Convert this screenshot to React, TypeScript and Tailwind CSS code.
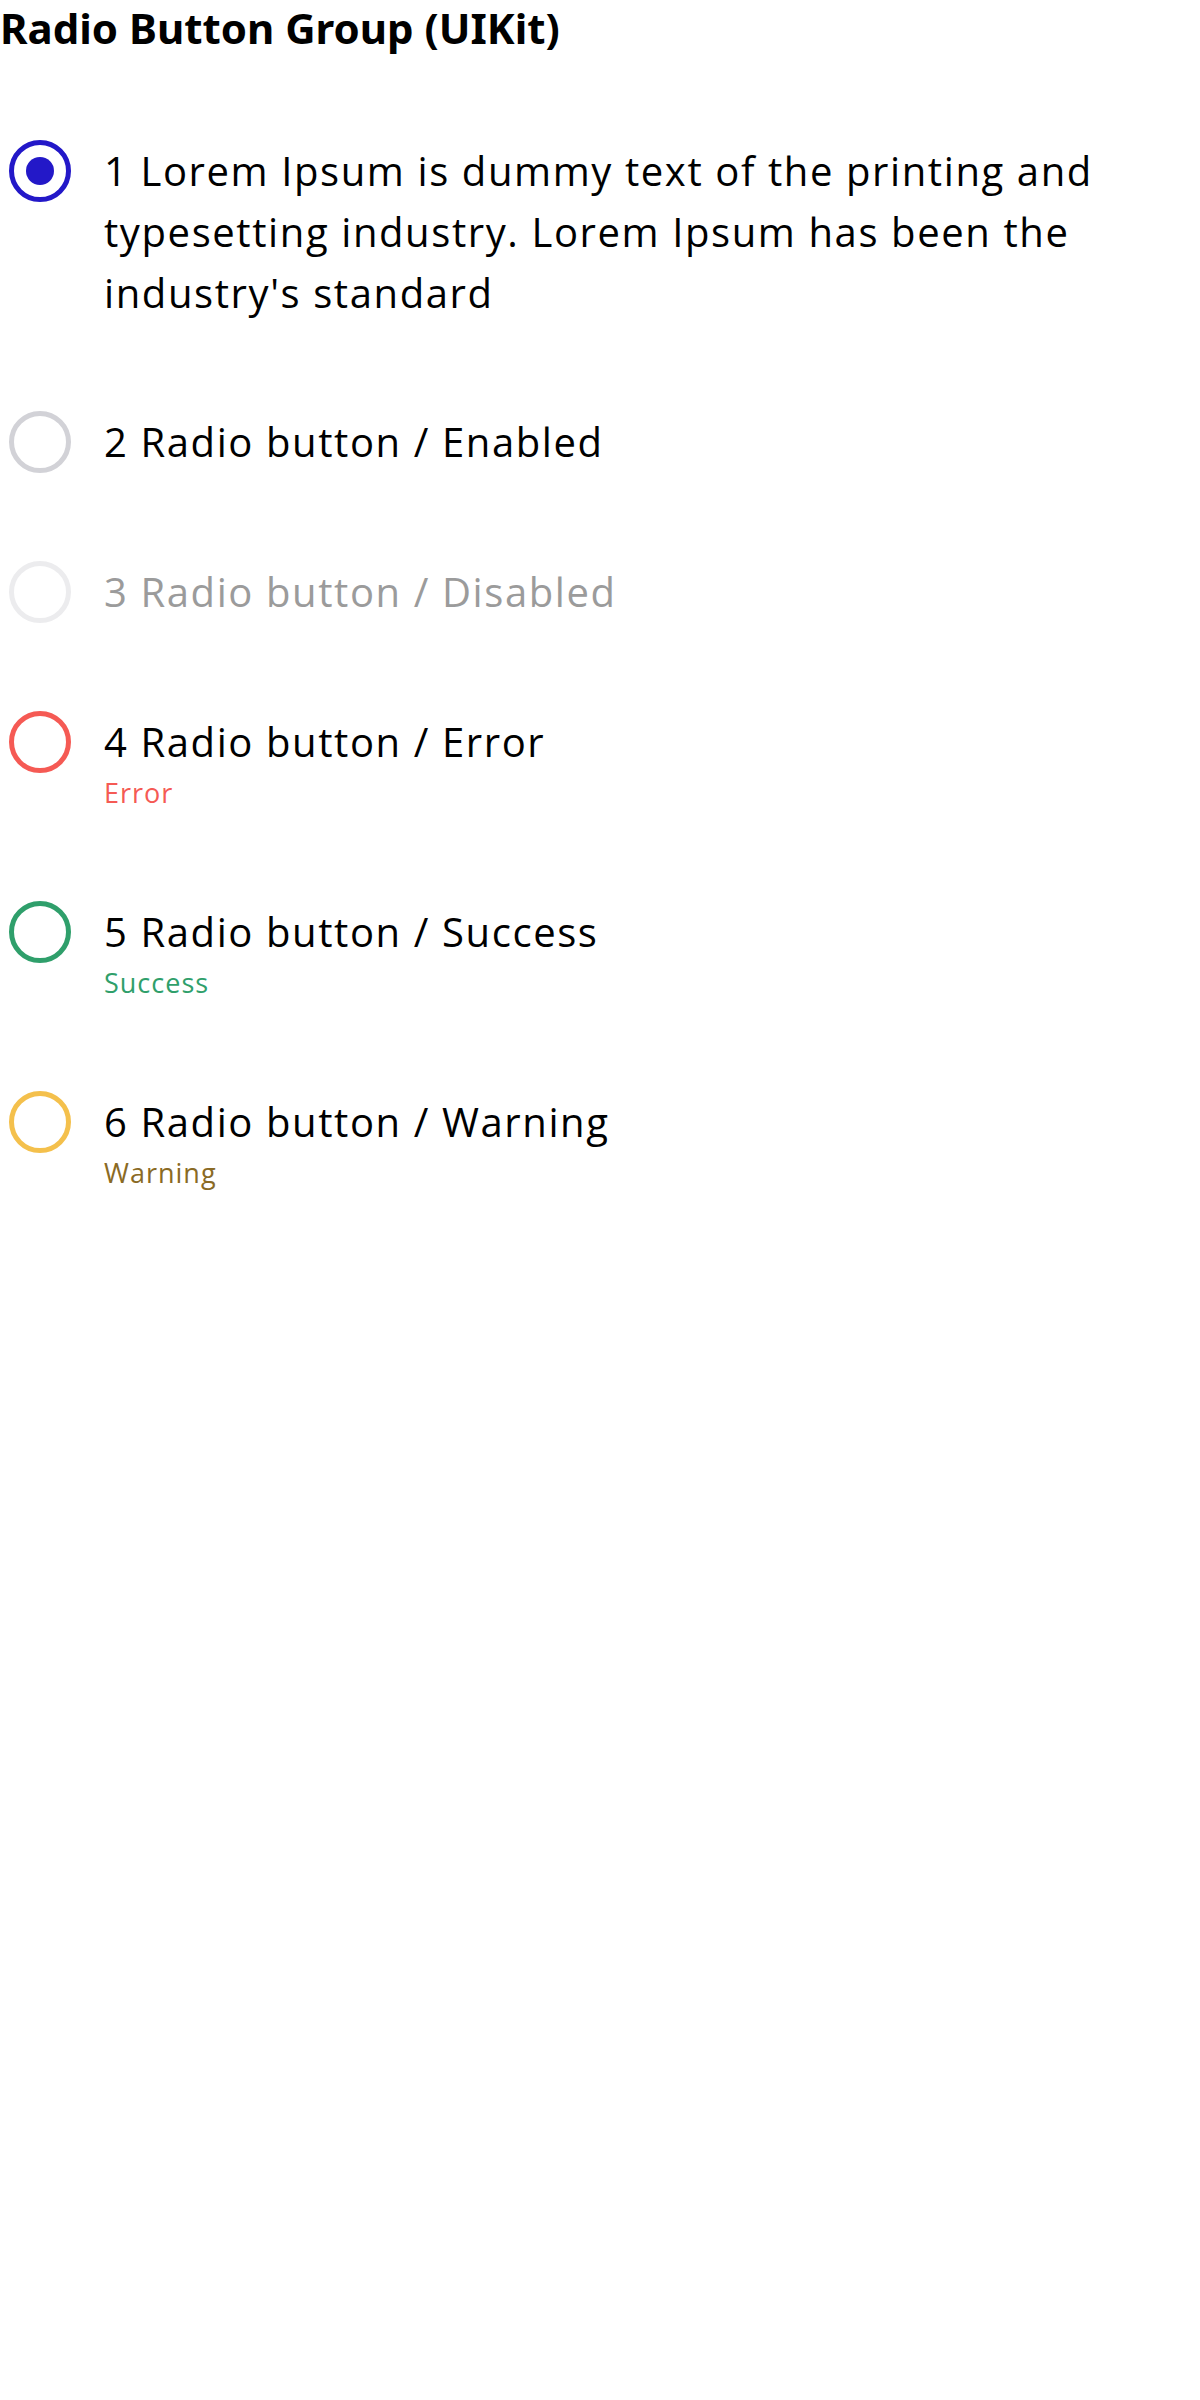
import React from "react";

type Variant = "checked" | "enabled" | "disabled" | "error" | "success" | "warning";

const ringClass: Record<Variant, string> = {
  checked: "border-[#2318c8]",
  enabled: "border-[#d2d2d7]",
  disabled: "border-[#ececee]",
  error: "border-[#f55a54]",
  success: "border-[#2f9f6b]",
  warning: "border-[#f4c04c]",
};

function Radio({ variant }: { variant: Variant }) {
  return (
    <div
      className={`w-[62px] h-[62px] shrink-0 rounded-full border-[5px] bg-white flex items-center justify-center ${ringClass[variant]}`}
    >
      {variant === "checked" && <div className="w-[28px] h-[28px] rounded-full bg-[#2318c8]" />}
    </div>
  );
}

function Row({
  variant,
  label,
  helper,
  helperClass,
}: {
  variant: Variant;
  label: string;
  helper?: string;
  helperClass?: string;
}) {
  return (
    <div className="flex items-start gap-[33px] pl-[9px]">
      <Radio variant={variant} />
      <div className="flex flex-col min-w-0 flex-1">
        <div
          className={`text-[40px] leading-[61px] tracking-[1.6px] ${variant === "disabled" ? "text-[#9b9b9b]" : "text-black"}`}
        >
          {label}
        </div>
        {helper && <div className={`text-[27px] leading-[41px] tracking-[1px] ${helperClass}`}>{helper}</div>}
      </div>
    </div>
  );
}

export default function App() {
  return (
    <div className="w-[1200px] min-h-[2400px] bg-white [font-family:'Open_Sans','Noto_Sans',sans-serif]">
      <h1 className="text-[42px] leading-[56px] font-bold text-black [font-family:'Noto_Sans',sans-serif]">
        Radio Button Group (UIKit)
      </h1>
      <div className="mt-[84px] flex flex-col gap-[88px]">
        <Row
          variant="checked"
          label="1 Lorem Ipsum is dummy text of the printing and typesetting industry. Lorem Ipsum has been the industry's standard"
        />
        <Row variant="enabled" label="2 Radio button / Enabled" />
        <Row variant="disabled" label="3 Radio button / Disabled" />
        <Row variant="error" label="4 Radio button / Error" helper="Error" helperClass="text-[#f55a54]" />
        <Row variant="success" label="5 Radio button / Success" helper="Success" helperClass="text-[#2f9f6b]" />
        <Row variant="warning" label="6 Radio button / Warning" helper="Warning" helperClass="text-[#8a6a24]" />
      </div>
    </div>
  );
}
